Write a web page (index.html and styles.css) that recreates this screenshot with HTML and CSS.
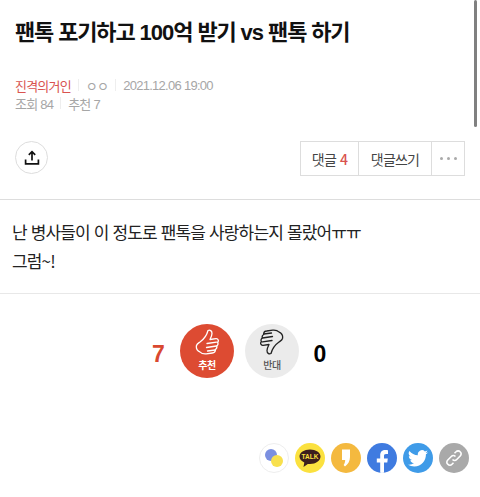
FILE: index.html
```html
<!DOCTYPE html>
<html lang="ko">
<head>
<meta charset="utf-8">
<title>팬톡</title>
<link rel="stylesheet" href="styles.css">
</head>
<body>
<div class="scrollbar"></div>
<header class="head">
  <h1 class="title">팬톡 포기하고 <span class="num">100</span>억 받기 <span class="num">vs</span> 팬톡 하기</h1>
  <div class="meta">
    <span class="author">진격의거인</span><i class="sep"></i><span>ㅇㅇ</span><i class="sep"></i><span class="num-light">2021.12.06 19:00</span>
  </div>
  <div class="meta">
    <span>조회 <span class="num-light">84</span></span><i class="sep"></i><span>추천 <span class="num-light">7</span></span>
  </div>
</header>
<div class="tools">
  <button class="share" aria-label="공유">
    <svg width="16" height="16" viewBox="0 0 16 16" fill="none" stroke="#111" stroke-width="1.7"><path d="M8 10.500V1.800M4.800 4.800 8 1.600l3.200 3.200M1.600 9.500v4.400h12.800V9.500"/></svg>
  </button>
  <div class="btns">
    <div class="btn btn-a">댓글<b>4</b></div>
    <div class="btn btn-b">댓글쓰기</div>
    <div class="btn btn-c"><i></i><i></i><i></i></div>
  </div>
</div>
<article class="body">
  <p>난 병사들이 이 정도로 팬톡을 사랑하는지 몰랐어ㅠㅠ</p>
  <p>그럼~!</p>
</article>
<section class="vote">
  <span class="count up">7</span>
  <div class="circle red">
    <svg class="thumb" viewBox="0 0 24 28" fill="none" stroke="#fff" stroke-width="1.300" stroke-linejoin="round" stroke-linecap="round"><path d="M13 1.500c2-.8 4 .2 4 3 0 2-1 4-2 6l6-.8c2.300-.2 3 2.300 1.600 3.600.8 1.300.3 3-.9 3.700.4 1.500-.2 2.900-1.400 3.500.2 2-1 3.300-3 3.500l-6 .9c-3 .3-5-.5-6.500-2C2 21.500 1 19 1.500 16.500c.4-1.700 2-2.500 3.500-3.500 3.500-2.500 6.500-5.500 8-11.500Z"/><path d="M12 14.500l9.500-1.300M11.500 18.500l10-1.500M12.500 22l7.800-1"/></svg>
    <span>추천</span>
  </div>
  <div class="circle gray">
    <svg class="thumb down" viewBox="0 0 24 28" fill="none" stroke="#222" stroke-width="1.300" stroke-linejoin="round" stroke-linecap="round"><path d="M13 1.500c2-.8 4 .2 4 3 0 2-1 4-2 6l6-.8c2.300-.2 3 2.300 1.600 3.600.8 1.300.3 3-.9 3.700.4 1.500-.2 2.900-1.400 3.500.2 2-1 3.300-3 3.500l-6 .9c-3 .3-5-.5-6.500-2C2 21.500 1 19 1.500 16.500c.4-1.700 2-2.500 3.500-3.500 3.500-2.500 6.500-5.500 8-11.500Z"/><path d="M12 14.500l9.500-1.300M11.500 18.500l10-1.500M12.500 22l7.800-1"/></svg>
    <span>반대</span>
  </div>
  <span class="count zero">0</span>
</section>
<footer class="social">
  <div class="sns s-line">
    <svg width="22" height="22" viewBox="0 0 22 22"><circle cx="8" cy="8" r="6" fill="#7b8fe0"/><circle cx="14" cy="14" r="6" fill="#f8e04e"/></svg>
  </div>
  <div class="sns s-kakao">
    <svg width="22" height="19" viewBox="0 0 22 19"><path d="M11 .5C5.200.5.500 3.600.500 7.500c0 2.500 1.900 4.700 4.800 6L4.500 18l4.300-3c.7.100 1.400.1 2.200.1 5.800 0 10.500-3.400 10.500-7.500S16.800.500 11 .5Z" fill="#3c1e1e"/><text x="11" y="10.300" class="talk" text-anchor="middle">TALK</text></svg>
  </div>
  <div class="sns s-story">
    <svg width="10" height="18" viewBox="0 0 10 18"><path d="M1 .5h8v7.500c0 4-2 7.200-5 9.500L2.600 16c1-1.400 1.500-3 1.600-5H1Z" fill="#fff"/></svg>
  </div>
  <div class="sns s-fb">
    <svg width="12" height="24" viewBox="0 0 12 24"><path d="M8 24V13.500h3.300l.5-4H8V7c0-1.200.4-2 2-2h2V1.300C11.600 1.200 10.500 1 9.300 1 6.300 1 4.200 2.900 4.200 6.200v3.300H.8v4h3.400V24Z" fill="#fff"/></svg>
  </div>
  <div class="sns s-tw">
    <svg width="20" height="17" viewBox="0 0 24 20"><path d="M24 2.400c-.9.400-1.800.7-2.800.8 1-.6 1.800-1.600 2.200-2.700-1 .6-2 1-3.100 1.200A4.900 4.900 0 0 0 11.900 6.200 14 14 0 0 1 1.700 1a4.900 4.900 0 0 0 1.500 6.600c-.8 0-1.600-.2-2.200-.6 0 2.400 1.700 4.400 3.900 4.900-.7.200-1.500.2-2.200.1.600 2 2.400 3.400 4.600 3.400A9.900 9.900 0 0 1 0 17.400 14 14 0 0 0 7.500 19.600c9.100 0 14.300-7.700 14-14.600 1-.7 1.800-1.600 2.500-2.600Z" fill="#fff"/></svg>
  </div>
  <div class="sns s-link">
    <svg width="20" height="20" viewBox="0 0 20 20" fill="none" stroke="#fff" stroke-width="1.600"><path d="M8.500 11.500c1.400 1.400 3 1.200 4.200 0l3.500-3.500c1.300-1.300 1.300-3 0-4.200-1.200-1.300-3-1.300-4.200 0l-1.500 1.500"/><path d="M11.500 8.500c-1.400-1.400-3-1.200-4.200 0L3.800 12c-1.300 1.300-1.300 3 0 4.200 1.200 1.300 3 1.300 4.200 0l1.500-1.500"/></svg>
  </div>
</footer>
</body>
</html>
```
FILE: styles.css
```css
* { box-sizing: border-box; }
html, body { margin: 0; padding: 0; }
body {
  width: 480px;
  height: 497px;
  overflow: hidden;
  background: #fff;
  font-family: "Noto Sans CJK KR", "Liberation Sans", sans-serif;
  color: #222;
  position: relative;
}
.scrollbar {
  position: absolute;
  right: 3px;
  top: 0;
  width: 3px;
  height: 127px;
  background: #808080;
  border-radius: 2px;
}
.head { padding: 15px 15px 0; }
.title {
  margin: 0;
  height: 34px;
  font-size: 22px;
  line-height: 31px;
  font-weight: 700;
  letter-spacing: -1.15px;
  color: #111;
  white-space: nowrap;
}
.num {
  font-family: "Liberation Sans", sans-serif;
  letter-spacing: -1px;
}
.num-light {
  font-family: "Liberation Sans", sans-serif;
  letter-spacing: -0.72px;
}
.meta {
  display: flex;
  align-items: center;
  height: 18px;
  font-size: 13px;
  font-weight: 400;
  letter-spacing: -0.8px;
  color: #a6a6a6;
  white-space: pre;
}
.head .meta:nth-child(2) { margin-top: 27px; }
.author { color: #d9534f; }
.sep {
  width: 1px;
  height: 12px;
  background: #eee;
  margin: 0 7px;
}
.tools {
  display: flex;
  justify-content: space-between;
  align-items: flex-start;
  margin-top: 29px;
  padding: 0 15px;
  height: 59px;
  border-bottom: 1px solid #ddd;
}
.share {
  display: flex;
  align-items: center;
  justify-content: center;
  width: 33px;
  height: 33px;
  padding: 0;
  background: #fff;
  border: 1px solid #ddd;
  border-radius: 50%;
}
.btns {
  display: flex;
  height: 35px;
  border: 1px solid #ddd;
  font-size: 14px;
  letter-spacing: -0.8px;
  color: #444;
}
.btn {
  display: flex;
  align-items: center;
  justify-content: center;
  gap: 4px;
  white-space: pre;
}
.btn + .btn { border-left: 1px solid #ddd; }
.btn-a { width: 57px; }
.btn-a b { font-weight: 500; color: #d9534f; }
.btn-b { width: 73px; }
.btn-c { width: 33px; gap: 4px; }
.btn-c i { width: 3px; height: 3px; border-radius: 50%; background: #aaa; }
.body {
  height: 94px;
  padding: 17px 12px 0;
  border-bottom: 1px solid #e8e8e8;
  font-size: 17px;
  letter-spacing: -0.85px;
  color: #222;
}
.body p { margin: 0; height: 29px; line-height: 29px; white-space: nowrap; }
.vote {
  display: flex;
  align-items: center;
  justify-content: center;
  gap: 11px;
  height: 54px;
  margin-top: 30px;
  padding-right: 1.5px;
}
.count {
  width: 14px;
  text-align: center;
  font-size: 23px;
  line-height: 54px;
  padding-top: 6px;
  font-weight: 700;
  color: #000;
  font-family: "Liberation Sans", sans-serif;
}
.count.up { color: #d9482f; margin-right: 3.5px; }
.count.zero { margin-left: 3px; }
.circle {
  display: flex;
  flex-direction: column;
  align-items: center;
  justify-content: flex-start;
  width: 54px;
  height: 54px;
  padding-top: 5px;
  border-radius: 50%;
  font-size: 10px;
  line-height: 14px;
  font-weight: 700;
  letter-spacing: -0.5px;
}
.thumb { display: block; width: 24px; height: 28px; margin-bottom: 1px; }
.thumb.down { transform: rotate(180deg); margin-top: -2px; margin-bottom: 3px; }
.red { background: #dd4b32; color: #fff; }
.gray { background: #ebebeb; color: #555; font-weight: 500; }
.social {
  display: flex;
  justify-content: flex-end;
  gap: 6px;
  margin-top: 65px;
  padding-right: 11px;
}
.sns {
  display: flex;
  align-items: center;
  justify-content: center;
  width: 30px;
  height: 30px;
  border-radius: 50%;
}
.s-line { background: #fff; border: 1px solid #eee; }
.s-kakao { background: #fbe13f; }
.s-story { background: #f4b93f; }
.s-fb { background: #3f7be0; overflow: hidden; align-items: flex-end; }
.s-tw { background: #3f9be8; }
.s-link { background: #a9a9a9; }
.talk { font: 700 6.500px "Liberation Sans", sans-serif; fill: #fbe13f; }
```
